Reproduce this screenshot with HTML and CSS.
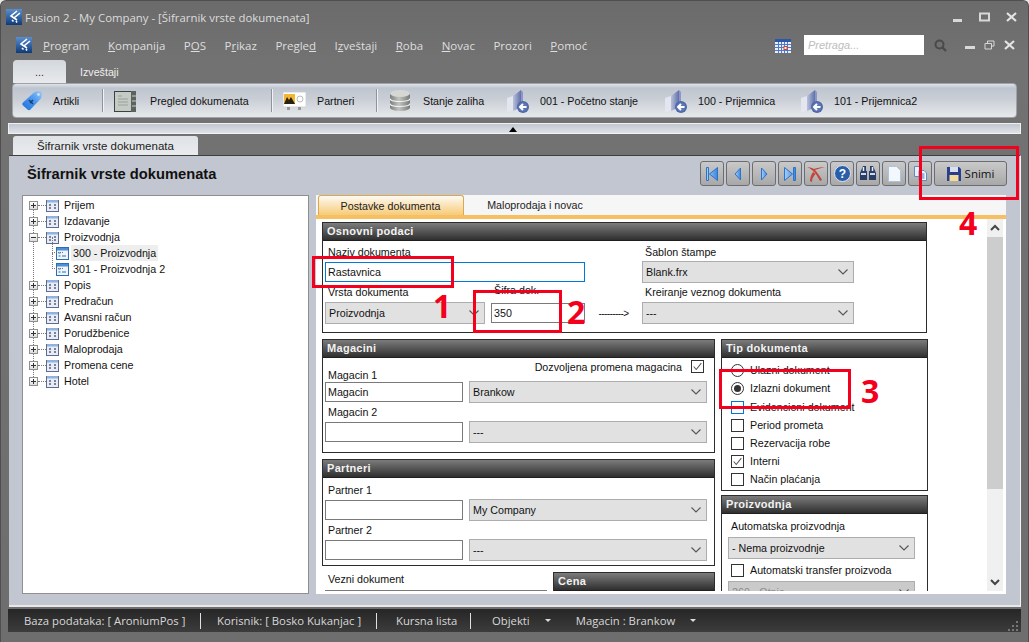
FILE: index.html
```html
<!DOCTYPE html>
<html lang="en">
<head>
    <meta charset="UTF-8">
    <meta name="viewport" content="width=device-width, initial-scale=1.0">
    <title>Fusion 2 - Šifrarnik vrste dokumenata</title>
    <link rel="stylesheet" href="styles.css">
</head>
<body>
    <!-- Shared icons -->
    <svg class="defs" width="0" height="0">
        <defs>
            <linearGradient id="logoBg" x1="0" y1="0" x2="0" y2="1">
                <stop offset="0" stop-color="#5a8fd0"/><stop offset="1" stop-color="#0f3a78"/>
            </linearGradient>
            <linearGradient id="folderBg" x1="0" y1="0" x2="1" y2="0">
                <stop offset="0" stop-color="#b9c1da"/><stop offset="1" stop-color="#5f70ab"/>
            </linearGradient>
            <linearGradient id="navBlue" x1="0" y1="0" x2="1" y2="0">
                <stop offset="0" stop-color="#a9cff5"/><stop offset="1" stop-color="#3d86dc"/>
            </linearGradient>
            <linearGradient id="tagBlue" x1="0" y1="1" x2="1" y2="0">
                <stop offset="0" stop-color="#1f6fd8"/><stop offset=".6" stop-color="#4f9cf0"/><stop offset="1" stop-color="#a3cdf6"/>
            </linearGradient>
            <linearGradient id="diskGrey" x1="0" y1="0" x2="1" y2="0">
                <stop offset="0" stop-color="#7c7e7c"/><stop offset=".45" stop-color="#c2c4c2"/><stop offset="1" stop-color="#777977"/>
            </linearGradient>
            <symbol id="logo" viewBox="0 0 16 16">
                <rect width="16" height="16" fill="url(#logoBg)"/>
                <path d="M11 2 5 7l3 2M14 4 8 9l3 2M6 11l1.500 1.500M10 12l1 1.500" fill="none" stroke="#fff" stroke-width="1.600"/>
            </symbol>
            <symbol id="folder-back" viewBox="0 0 24 24">
                <path d="M1 9 7 7V22L1 23Z" fill="#e3e6ee"/>
                <path d="M7 7 15 1V18L7 22Z" fill="url(#folderBg)"/>
                <path d="M15 1 17 3V14H15Z" fill="#8c97c4"/>
                <circle cx="17" cy="18" r="6" fill="#4f68a8"/>
                <circle cx="17" cy="18" r="4.500" fill="#5d76b4"/>
                <path d="M20.500 18H14.500M17 15l-3 3 3 3" fill="none" stroke="#fff" stroke-width="2"/>
            </symbol>
            <symbol id="tree-grid" viewBox="0 0 13 13">
                <rect x=".5" y="1.500" width="12" height="11" fill="#e8ecf4" stroke="#5f6b8c"/>
                <rect x="1" y="1" width="11" height="2.500" fill="#8fb2e0"/>
                <path d="M3 6h2M8 6h2M3 9h2M8 9h2" stroke="#555f80" stroke-width="1.400"/>
            </symbol>
            <symbol id="tree-form" viewBox="0 0 13 13">
                <rect x=".5" y=".5" width="12" height="12" fill="#eef4fc" stroke="#2d6db5"/>
                <rect x="1" y="1" width="11" height="2.500" fill="#4d90d8"/>
                <path d="M2.500 6h2M2.500 9h2M6 9h4" stroke="#2d6db5"/>
            </symbol>
            <symbol id="chev" viewBox="0 0 10 6">
                <path d="M.5.5 5 5 9.500.5" fill="none" stroke="#555" stroke-width="1.100"/>
            </symbol>
            <symbol id="tick" viewBox="0 0 13 13">
                <path d="M2 6.500 5 10 11 2.500" fill="none" stroke="#555" stroke-width="1.200"/>
            </symbol>
        </defs>
    </svg>

    <div class="window">
        <header class="titlebar">
            <svg class="logo"><use href="#logo"/></svg>
            <span class="title-text">Fusion 2 - My Company - [Šifrarnik vrste dokumenata]</span>
            <div class="win-controls">
                <svg width="11" height="11" viewBox="0 0 11 11"><rect x="1" y="7" width="9" height="3" fill="#d8d8d8"/></svg>
                <svg width="11" height="11" viewBox="0 0 11 11"><path d="M1 1.500h9v7H1z" fill="none" stroke="#d8d8d8" stroke-width="2"/></svg>
                <svg width="11" height="11" viewBox="0 0 11 11"><path d="M1 1l9 8M10 1 1 9" stroke="#e4e4e4" stroke-width="2.200"/></svg>
            </div>
        </header>

        <nav class="menubar">
            <svg class="logo"><use href="#logo"/></svg>
            <a><u>P</u>rogram</a>
            <a><u>K</u>ompanija</a>
            <a>P<u>O</u>S</a>
            <a>P<u>r</u>ikaz</a>
            <a>Pregle<u>d</u></a>
            <a>I<u>z</u>veštaji</a>
            <a><u>R</u>oba</a>
            <a><u>N</u>ovac</a>
            <a>Prozori</a>
            <a><u>P</u>omoć</a>
            <div class="menu-right">
                <svg class="calendar" width="16" height="15" viewBox="0 0 16 15">
                    <rect y="1" width="16" height="14" fill="#e8eefa"/>
                    <rect y="1" width="16" height="3" fill="#2e56a8"/>
                    <path d="M0 6.500h16M0 9.500h16M0 12.500h16M3.500 4v11M6.500 4v11M9.500 4v11M12.500 4v11" stroke="#4f78c8"/>
                    <rect x="9" y="8.500" width="3" height="3" fill="#fff" stroke="#d8412a"/>
                </svg>
                <input class="search" type="text" placeholder="Pretraga...">
                <svg class="search-icon" width="13" height="13" viewBox="0 0 13 13">
                    <circle cx="5.500" cy="5.500" r="4" fill="none" stroke="#4a4a4a" stroke-width="2"/>
                    <path d="M8.500 8.500 12 12" stroke="#4a4a4a" stroke-width="2.400"/>
                </svg>
                <div class="mdi-controls">
                    <svg width="11" height="11" viewBox="0 0 11 11"><rect x="1" y="6" width="10" height="3" fill="#d8d8d8"/></svg>
                    <svg width="11" height="11" viewBox="0 0 11 11"><path d="M3.500 3V1h6.500v5H8M1 3.500h6.500V9H1z" fill="none" stroke="#d8d8d8"/></svg>
                    <svg width="11" height="11" viewBox="0 0 11 11"><path d="M1 1l9 8M10 1 1 9" stroke="#e4e4e4" stroke-width="2.200"/></svg>
                </div>
            </div>
        </nav>

        <div class="ribbon-tabs">
            <a class="ribbon-tab active">...</a>
            <a class="ribbon-tab">Izveštaji</a>
        </div>

        <div class="toolbar">
            <a class="tool w-artikli">
                <svg width="21" height="21" viewBox="0 0 21 21">
                    <path d="M1 12.500 12 2.500q1-.9 2.500-1l4-.5q1.500 0 1.500 1.500l-.5 4q-.1 1.500-1 2.500L8.500 19.500q-1.500 1.500-3 0L1 15.500q-1.500-1.500 0-3Z" fill="url(#tagBlue)"/>
                    <circle cx="16.500" cy="4.500" r="1.300" fill="#dfe6ee"/>
                    <path d="M7 10l4 4M8 13l3-3" stroke="#1d3f78" stroke-width="1.600"/>
                </svg>
                <span>Artikli</span>
            </a>
            <i class="tool-sep"></i>
            <a class="tool w-pregled">
                <svg width="22" height="22" viewBox="0 0 22 22">
                    <rect x=".5" y="1.500" width="17" height="20" fill="#c4cac4" stroke="#3c423e"/>
                    <rect x="17" y="1" width="5" height="21" fill="#5c625e"/>
                    <path d="M4 6h4M4 9h10M4 12h10M4 15h10" stroke="#9aa09c"/>
                    <path d="M18 6h4M18 11h4M18 16h4" stroke="#c8cec8"/>
                </svg>
                <span>Pregled dokumenata</span>
            </a>
            <i class="tool-sep"></i>
            <a class="tool w-partneri">
                <svg width="23" height="18" viewBox="0 0 23 18">
                    <rect width="23" height="15" fill="#fff" stroke="#d4d4d4"/>
                    <rect x="1" y="2" width="11" height="10" fill="#f2b632"/>
                    <path d="M1 12l3-7 2 3 2-3 4 7Z" fill="#2b2010"/>
                    <circle cx="17" cy="7" r="3" fill="none" stroke="#bbb"/>
                    <path d="M4 15h3v3H4zM15 15h3v3h-3z" fill="#999"/>
                </svg>
                <span>Partneri</span>
            </a>
            <i class="tool-sep"></i>
            <a class="tool w-zalihe">
                <svg width="20" height="21" viewBox="0 0 20 21">
                    <path d="M0 3.500v14c0 4.500 20 4.500 20 0v-14Z" fill="url(#diskGrey)"/>
                    <ellipse cx="10" cy="3.500" rx="10" ry="3.500" fill="#d5d7d5"/>
                    <path d="M0 8.500c0 4 20 4 20 0M0 13.500c0 4 20 4 20 0" fill="none" stroke="#f0f0f0" stroke-width="1.200"/>
                </svg>
                <span>Stanje zaliha</span>
            </a>
            <a class="tool w-doc1"><svg class="doc-icon"><use href="#folder-back"/></svg><span>001 - Početno stanje</span></a>
            <a class="tool w-doc2"><svg class="doc-icon"><use href="#folder-back"/></svg><span>100 - Prijemnica</span></a>
            <a class="tool w-doc3"><svg class="doc-icon"><use href="#folder-back"/></svg><span>101 - Prijemnica2</span></a>
        </div>

        <div class="splitter"><i class="split-arrow"></i></div>

        <div class="doc-tabs"><a class="doc-tab">Šifrarnik vrste dokumenata</a></div>

        <main class="main">
            <div class="main-head">
                <h1>Šifrarnik vrste dokumenata</h1>
                <div class="actions">
                    <button class="act"><svg width="14" height="14" viewBox="0 0 14 14"><path d="M1.500.5h2v13h-2zM12.500.5v13L4.500 7Z" fill="url(#navBlue)" stroke="#2a73cf"/></svg></button>
                    <button class="act"><svg width="14" height="14" viewBox="0 0 14 14"><path d="M9.500 1v12L4 7Z" fill="url(#navBlue)" stroke="#2a73cf"/></svg></button>
                    <button class="act"><svg width="14" height="14" viewBox="0 0 14 14"><path d="M4.500 1v12L10 7Z" fill="url(#navBlue)" stroke="#2a73cf"/></svg></button>
                    <button class="act"><svg width="14" height="14" viewBox="0 0 14 14"><path d="M1.500.5v13L9.500 7ZM10.500.5h2v13h-2z" fill="url(#navBlue)" stroke="#2a73cf"/></svg></button>
                    <button class="act"><svg width="18" height="16" viewBox="0 0 18 16"><path d="M0 1c5 2 9 6 13 14L15 14C12 9 10 6 8 4c3-1 6-2 10-3-5 0-8 1-11 2C5 2 3 1 0 1ZM6 6C4 9 3 12 3 15L5 16C5 12 7 10 8.500 8Z" fill="#c4453a"/></svg></button>
                    <button class="act"><svg width="17" height="17" viewBox="0 0 17 17"><circle cx="8.500" cy="8.500" r="8" fill="#2a5ea8" stroke="#dfe6f2"/><text class="help-mark" x="8.500" y="13" text-anchor="middle">?</text></svg></button>
                    <button class="act"><svg width="16" height="15" viewBox="0 0 16 15"><path d="M3 0h3v5h1v9H0V7ZM10 0h3l3 7v7H9V5h1Z" fill="#2b3f66"/><path d="M3.500 1v4M12.500 1v4" stroke="#e8eefa" stroke-width="1.500"/><path d="M1 8h5M10 8h5" stroke="#cfd9ee" stroke-width="2"/></svg></button>
                    <button class="act"><svg width="13" height="16" viewBox="0 0 13 16"><path d="M.5.5h8l4 4v11H.5Z" fill="#f4f8fd" stroke="#a8c4e4"/></svg></button>
                    <button class="act"><svg width="13" height="15" viewBox="0 0 13 15"><path d="M.5.500h6v10h-6Z" fill="#e8f0fa" stroke="#5b8bc6"/><path d="M5 4.500h5l2.500 2.500v7.500H5Z" fill="#f4f8fd" stroke="#5b8bc6"/><path d="M6.500 8h4M6.500 10h4M6.500 12h4" stroke="#3f75b8"/></svg></button>
                    <button class="act save">
                        <svg width="14" height="14" viewBox="0 0 14 14"><path d="M0 0h12l2 2v12H0Z" fill="#2a3f8c"/><rect x="3" y="0" width="8" height="5" fill="#d8dff0"/><rect x="2.500" y="8" width="9" height="6" fill="#f3dc9a"/></svg>
                        <span>Snimi</span>
                    </button>
                </div>
            </div>

            <div class="main-body">
                <aside class="tree">
                    <ul class="tree-list">
                        <li class="tree-row"><i class="expander plus"></i><svg class="node-icon"><use href="#tree-grid"/></svg>Prijem</li>
                        <li class="tree-row"><i class="expander plus"></i><svg class="node-icon"><use href="#tree-grid"/></svg>Izdavanje</li>
                        <li class="tree-row"><i class="expander minus"></i><svg class="node-icon"><use href="#tree-grid"/></svg>Proizvodnja</li>
                        <li class="tree-row child first-child"><svg class="node-icon"><use href="#tree-form"/></svg><span class="selected">300 - Proizvodnja</span></li>
                        <li class="tree-row child"><svg class="node-icon"><use href="#tree-form"/></svg><span class="leaf">301 - Proizvodnja 2</span></li>
                        <li class="tree-row"><i class="expander plus"></i><svg class="node-icon"><use href="#tree-grid"/></svg>Popis</li>
                        <li class="tree-row"><i class="expander plus"></i><svg class="node-icon"><use href="#tree-grid"/></svg>Predračun</li>
                        <li class="tree-row"><i class="expander plus"></i><svg class="node-icon"><use href="#tree-grid"/></svg>Avansni račun</li>
                        <li class="tree-row"><i class="expander plus"></i><svg class="node-icon"><use href="#tree-grid"/></svg>Porudžbenice</li>
                        <li class="tree-row"><i class="expander plus"></i><svg class="node-icon"><use href="#tree-grid"/></svg>Maloprodaja</li>
                        <li class="tree-row"><i class="expander plus"></i><svg class="node-icon"><use href="#tree-grid"/></svg>Promena cene</li>
                        <li class="tree-row"><i class="expander plus"></i><svg class="node-icon"><use href="#tree-grid"/></svg>Hotel</li>
                    </ul>
                </aside>

                <section class="pane">
                    <div class="pane-tabs">
                        <a class="pane-tab active">Postavke dokumenta</a>
                        <a class="pane-tab">Maloprodaja i novac</a>
                    </div>
                    <div class="pane-body">
                        <div class="form-scroll">
                            <div class="group group-main">
                                <h2 class="group-head">Osnovni podaci</h2>
                                <div class="grid-main">
                                    <label class="lbl span-3">Naziv dokumenta</label>
                                    <label class="lbl col-5">Šablon štampe</label>
                                    <input class="txt focus span-3" type="text" value="Rastavnica">
                                    <div class="sel col-5"><span>Blank.frx</span><svg class="chev"><use href="#chev"/></svg></div>
                                    <label class="lbl lbl-up">Vrsta dokumenta</label>
                                    <label class="lbl code-lbl col-3">Šifra dok.</label>
                                    <label class="lbl lbl-up col-5">Kreiranje veznog dokumenta</label>
                                    <div class="sel"><span>Proizvodnja</span><svg class="chev"><use href="#chev"/></svg></div>
                                    <input class="txt col-3" type="text" value="350">
                                    <span class="dash-arrow">---------&gt;</span>
                                    <div class="sel col-5"><span>---</span><svg class="chev"><use href="#chev"/></svg></div>
                                </div>
                            </div>

                            <div class="columns">
                                <div class="col-left">
                                    <div class="group">
                                        <h2 class="group-head">Magacini</h2>
                                        <div class="grid-pair pair-store">
                                            <div class="allow-row">
                                                <span>Dozvoljena promena magacina</span>
                                                <i class="box checked"><svg width="13" height="13"><use href="#tick"/></svg></i>
                                            </div>
                                            <label class="lbl span-2 lbl-tight">Magacin 1</label>
                                            <input class="txt" type="text" value="Magacin">
                                            <div class="sel"><span>Brankow</span><svg class="chev"><use href="#chev"/></svg></div>
                                            <label class="lbl span-2">Magacin 2</label>
                                            <input class="txt" type="text">
                                            <div class="sel"><span>---</span><svg class="chev"><use href="#chev"/></svg></div>
                                        </div>
                                    </div>

                                    <div class="group">
                                        <h2 class="group-head">Partneri</h2>
                                        <div class="grid-pair pair-partner">
                                            <label class="lbl span-2">Partner 1</label>
                                            <input class="txt" type="text">
                                            <div class="sel"><span>My Company</span><svg class="chev"><use href="#chev"/></svg></div>
                                            <label class="lbl span-2">Partner 2</label>
                                            <input class="txt" type="text">
                                            <div class="sel"><span>---</span><svg class="chev"><use href="#chev"/></svg></div>
                                        </div>
                                    </div>

                                    <div class="bottom-row">
                                        <div class="linked">
                                            <label class="lbl">Vezni dokument</label>
                                            <input class="txt" type="text">
                                        </div>
                                        <div class="group group-price">
                                            <h2 class="group-head">Cena</h2>
                                        </div>
                                    </div>
                                </div>

                                <div class="col-right">
                                    <div class="group">
                                        <h2 class="group-head">Tip dokumenta</h2>
                                        <ul class="opts">
                                            <li><i class="radio"></i>Ulazni dokument</li>
                                            <li><i class="radio on"></i>Izlazni dokument</li>
                                            <li><i class="box focus"></i>Evidencioni dokument</li>
                                            <li><i class="box"></i>Period prometa</li>
                                            <li><i class="box"></i>Rezervacija robe</li>
                                            <li><i class="box checked"><svg width="13" height="13"><use href="#tick"/></svg></i>Interni</li>
                                            <li><i class="box"></i>Način plaćanja</li>
                                        </ul>
                                    </div>
                                    <div class="group">
                                        <h2 class="group-head">Proizvodnja</h2>
                                        <div class="prod">
                                            <label class="lbl">Automatska proizvodnja</label>
                                            <div class="sel"><span>- Nema proizvodnje</span><svg class="chev"><use href="#chev"/></svg></div>
                                            <div class="prod-check"><i class="box"></i>Automatski transfer proizvoda</div>
                                            <div class="sel disabled"><span>260 - Otpis</span><svg class="chev"><use href="#chev"/></svg></div>
                                        </div>
                                    </div>
                                </div>
                            </div>
                        </div>

                        <div class="scrollbar">
                            <svg class="sb-arrow" width="16" height="18" viewBox="0 0 16 18"><path d="M4 11 8 7l4 4" fill="none" stroke="#444" stroke-width="2"/></svg>
                            <div class="sb-thumb"></div>
                            <svg class="sb-arrow" width="16" height="18" viewBox="0 0 16 18"><path d="M4 7l4 4 4-4" fill="none" stroke="#444" stroke-width="2"/></svg>
                        </div>
                    </div>
                </section>
            </div>
        </main>

        <footer class="statusbar">
            <span class="st st-db">Baza podataka: [ AroniumPos ]</span>
            <span class="st st-user">Korisnik: [ Bosko Kukanjac ]</span>
            <span class="st st-rate">Kursna lista</span>
            <span class="st-drop st-obj">Objekti<i class="drop"></i></span>
            <span class="st-drop st-store">Magacin : Brankow<i class="drop"></i></span>
            <svg class="grip" width="12" height="12" viewBox="0 0 12 12"><path d="M9 1h2v2H9zM5 5h2v2H5zM9 5h2v2H9zM1 9h2v2H1zM5 9h2v2H5zM9 9h2v2H9z" fill="#777"/></svg>
        </footer>

        <!-- Red annotations drawn over the screenshot -->
        <i class="mark mark-1"></i><b class="num num-1">1</b>
        <i class="mark mark-2"></i><b class="num num-2">2</b>
        <i class="mark mark-3"></i><b class="num num-3">3</b>
        <i class="mark mark-4"></i><b class="num num-4">4</b>
    </div>
</body>
</html>
```

FILE: styles.css
```css
html, body {
    margin: 0;
    padding: 0;
    height: 100%;
    overflow: hidden;
    background: #e9e9e9;
}
body {
    font-family: "Liberation Sans", Arial, sans-serif;
    font-size: 10.700px;
    color: #111;
}
.defs {
    position: absolute;
}
a {
    cursor: pointer;
}
.window {
    position: relative;
    display: flex;
    flex-direction: column;
    width: 1029px;
    height: 642px;
    box-sizing: border-box;
    border: 1px solid #4f4f4f;
    border-bottom: 0;
    border-radius: 6px 6px 0 0;
    background: linear-gradient(#6b6b6b, #727272 60px, #6e6e6e);
    overflow: hidden;
}

/* Title bar and menu */
.titlebar {
    display: flex;
    align-items: center;
    flex: none;
    height: 29px;
    padding: 3px 0 0 5px;
    box-sizing: border-box;
    color: #dcdcdc;
    font-family: "Open Sans", sans-serif;
    font-size: 11.400px;
}
.logo {
    width: 16px;
    height: 16px;
    flex: none;
}
.title-text {
    margin-left: 3px;
}
.win-controls {
    display: flex;
    gap: 16px;
    margin-left: auto;
    margin-right: 11px;
}
.menubar {
    display: flex;
    align-items: center;
    flex: none;
    height: 30px;
    padding-left: 15px;
    color: #dedede;
    font-family: "Open Sans", sans-serif;
    font-size: 11.500px;
}
.menubar a {
    margin-right: 18.500px;
}
.menubar .logo {
    margin-right: 11px;
}
.menu-right {
    display: flex;
    align-items: center;
    margin-left: auto;
}
.calendar {
    margin-right: 13px;
}
.search {
    width: 120px;
    height: 20px;
    box-sizing: border-box;
    border: 0;
    padding: 0 4px;
    background: #fff;
    font: italic 11px "Liberation Sans", sans-serif;
}
.search::placeholder {
    color: #bdbdbd;
}
.search-icon {
    margin: 0 17px 0 10px;
}
.mdi-controls {
    display: flex;
    gap: 9px;
    margin-right: 13px;
}

/* Ribbon */
.ribbon-tabs {
    display: flex;
    flex: none;
    height: 23px;
    padding-left: 12px;
}
.ribbon-tab {
    display: flex;
    align-items: center;
    justify-content: center;
    color: #eee;
    padding: 0 14px;
}
.ribbon-tab.active {
    width: 53px;
    padding: 0;
    box-sizing: border-box;
    color: #333;
    border-radius: 4px 4px 0 0;
    background: linear-gradient(#d3d7dd, #e8eaec);
}
.toolbar {
    display: flex;
    align-items: center;
    flex: none;
    height: 35px;
    margin: 0 11px 0 11px;
    box-sizing: border-box;
    border: 1px solid #9fa3a9;
    border-radius: 4px;
    background: linear-gradient(#dfe3e8, #bfc5cf 12%, #c9ced6 45%, #e6e9eb);
}
.tool {
    display: flex;
    align-items: center;
    color: #111;
    flex: none;
}
.tool-sep {
    flex: none;
    width: 1px;
    height: 23px;
    background: #8f949c;
    box-shadow: 1px 0 0 #f0f2f4;
}
.w-artikli { width: 89px; padding-left: 9px; box-sizing: border-box; }
.w-artikli span { margin-left: 10px; }
.w-pregled { width: 168px; padding-left: 11px; box-sizing: border-box; }
.w-pregled span { margin-left: 14px; }
.w-partneri { width: 104px; padding-left: 11px; box-sizing: border-box; }
.w-partneri span { margin-left: 11px; }
.w-zalihe { width: 129px; padding-left: 13px; box-sizing: border-box; }
.w-zalihe span { margin-left: 13px; }
.w-doc1 { width: 158px; }
.w-doc2 { width: 136px; }
.doc-icon {
    width: 24px;
    height: 24px;
    margin-right: 10px;
    flex: none;
}
.splitter {
    position: relative;
    flex: none;
    height: 11px;
    margin: 5px 7px 0 7px;
    border: 1px solid #eef0f2;
    box-sizing: border-box;
    background: linear-gradient(#c2c7d0, #dfe2e7);
}
.split-arrow {
    position: absolute;
    left: 500px;
    top: 3px;
    border: 4px solid transparent;
    border-top: 0;
    border-bottom: 5px solid #000;
}
.doc-tabs {
    display: flex;
    flex: none;
    height: 19px;
    margin-top: 2px;
    padding-left: 12px;
}
.doc-tab {
    display: flex;
    align-items: center;
    justify-content: center;
    width: 185px;
    border-radius: 3px 3px 0 0;
    background: linear-gradient(#dfe2e6, #e9ebed);
    color: #222;
    font-size: 11.500px;
}

/* Main panel */
.main {
    display: flex;
    flex-direction: column;
    width: 1012px;
    height: 452px;
    margin-left: 8px;
    box-sizing: border-box;
    padding: 0 14px 11px 13px;
    border-top: 1px solid #3f3f3f;
    border-right: 1px solid #f2f2f2;
    border-bottom: 2px solid #e8e8e8;
    background: #c2c6d0;
}
.main-head {
    display: flex;
    align-items: center;
    justify-content: space-between;
    flex: none;
    height: 39px;
    padding: 0 0 4px 5px;
    box-sizing: border-box;
}
.main-head h1 {
    margin: 0;
    font-size: 14.700px;
    font-weight: bold;
    color: #111;
}
.actions {
    display: flex;
    gap: 2px;
    margin-right: -1px;
}
.act {
    display: flex;
    align-items: center;
    justify-content: center;
    width: 24px;
    height: 25px;
    padding: 0;
    border: 1px solid #6d6d6d;
    border-radius: 3px;
    background: linear-gradient(#c9c9c9, #a8a8a8);
    font: 11.500px "Open Sans", sans-serif;
    color: #111;
}
.act.save {
    width: 73px;
    gap: 4px;
}
.help-mark {
    font: bold 12px "Liberation Sans", sans-serif;
    fill: #fff;
}
.main-body {
    display: flex;
    gap: 7px;
    flex: 1;
    min-height: 0;
}

/* Tree */
.tree {
    width: 287px;
    box-sizing: border-box;
    border: 1px solid #8f8f8f;
    background: #fff;
    flex: none;
}
.tree-list {
    position: relative;
    list-style: none;
    margin: 0;
    padding: 1px 0 0 6px;
}
.tree-list::before {
    content: "";
    position: absolute;
    left: 10px;
    top: 9px;
    height: 176px;
    border-left: 1px dotted #777;
}
.tree-row {
    position: relative;
    display: flex;
    align-items: center;
    height: 16px;
    white-space: nowrap;
}
.expander {
    position: relative;
    flex: none;
    width: 9px;
    height: 9px;
    box-sizing: border-box;
    border: 1px solid #8f8f8f;
    background: linear-gradient(#fff, #dcdcdc);
    z-index: 1;
}
.expander::before {
    content: "";
    position: absolute;
    left: 1px;
    top: 3px;
    width: 5px;
    height: 1px;
    background: #333;
}
.expander.plus::after {
    content: "";
    position: absolute;
    left: 3px;
    top: 1px;
    width: 1px;
    height: 5px;
    background: #333;
}
.node-icon {
    flex: none;
    width: 13px;
    height: 13px;
    margin-right: 5px;
    margin-left: 8px;
}
.tree-row:not(.child)::after {
    content: "";
    position: absolute;
    left: 9px;
    top: 8px;
    width: 8px;
    border-top: 1px dotted #777;
}
.tree-row.child {
    padding-left: 27px;
}
.tree-row.child .node-icon {
    margin-left: 0;
    margin-right: 2px;
}
.tree-row.child::before {
    content: "";
    position: absolute;
    left: 23px;
    top: -8px;
    height: 16px;
    width: 11px;
    border-left: 1px dotted #777;
    border-bottom: 1px dotted #777;
    box-sizing: border-box;
}
.selected, .leaf {
    padding: 1px 2px;
    line-height: 14px;
}
.selected {
    background: #eeeeee;
}

/* Right pane */
.pane {
    display: flex;
    flex-direction: column;
    flex: 1;
    min-width: 0;
    background: #fff;
    padding-bottom: 3px;
    box-sizing: border-box;
}
.pane-tabs {
    display: flex;
    flex: none;
    height: 24px;
    box-sizing: border-box;
    padding: 0 0 0 2px;
    border-bottom: 4px solid #f5bf62;
    background: #f6f6f6;
}
.pane-tab {
    display: flex;
    align-items: center;
    justify-content: center;
    width: 140px;
    color: #222;
}
.pane-tab + .pane-tab {
    margin-left: 1px;
}
.pane-tab.active {
    width: 146px;
    box-sizing: border-box;
    padding-right: 1px;
    border: 1px solid #d9a94e;
    border-bottom: 0;
    border-radius: 3px 3px 0 0;
    background: linear-gradient(#fdfaf2, #f7cb78);
}
.pane-body {
    display: flex;
    flex: 1;
    min-height: 0;
}
.form-scroll {
    flex: 1;
    min-width: 0;
    padding: 3px 0 0 6px;
    overflow: hidden;
}
.scrollbar {
    display: flex;
    flex-direction: column;
    flex: none;
    width: 16px;
    margin-right: 3px;
    background: #f0f0f0;
}
.sb-arrow {
    flex: none;
}
.sb-thumb {
    height: 252px;
    background: #cdcdcd;
    margin-bottom: auto;
}

/* Group boxes */
.group {
    border: 1px solid #2c2c2c;
    background: #fff;
}
.group-head {
    margin: 0;
    height: 17px;
    padding-left: 4px;
    line-height: 16px;
    font-size: 11px;
    font-weight: bold;
    letter-spacing: .3px;
    color: #f2f2f2;
    background: linear-gradient(#7c7c7c, #2f2f2f);
    border-bottom: 1px solid #1f1f1f;
    box-sizing: content-box;
}
.group-main {
    width: 603px;
    height: 109px;
}
.lbl {
    display: block;
    padding-left: 3px;
    color: #111;
    white-space: nowrap;
}
.txt {
    display: block;
    width: 100%;
    height: 20px;
    box-sizing: border-box;
    margin: 0;
    padding: 0 2px;
    border: 1px solid #7a7a7a;
    background: #fff;
    font: 10.700px "Liberation Sans", sans-serif;
    color: #111;
    outline: 0;
}
.txt.focus {
    border-color: #0078d7;
}
.sel {
    display: flex;
    align-items: center;
    justify-content: space-between;
    height: 22px;
    box-sizing: border-box;
    padding: 0 5px 0 3px;
    border: 1px solid #adadad;
    background: #e1e1e1;
    color: #111;
}
.sel.disabled {
    color: #8a8a8a;
    background: #cacaca;
}
.chev {
    width: 10px;
    height: 6px;
    flex: none;
}
.grid-main {
    display: grid;
    grid-template-columns: 160px 6px 94px 57px 212px;
    grid-template-rows: 20px 22px 19px 22px;
    align-items: center;
    margin-left: 2px;
}
.grid-main > .lbl:nth-child(-n+2) {
    padding-top: 1px;
}
.span-3 { grid-column: 1 / span 3; }
.col-3 { grid-column: 3; }
.col-5 { grid-column: 5; }
.code-lbl {
    align-self: start;
    padding-top: 1px;
}
.lbl-up {
    padding-bottom: 2px;
}
.dash-arrow {
    grid-column: 4;
    justify-self: center;
    font-size: 10px;
    letter-spacing: -.6px;
    white-space: nowrap;
}
.columns {
    display: flex;
    gap: 6px;
    margin-top: 6px;
}
.col-left {
    display: flex;
    flex-direction: column;
    gap: 6px;
    flex: none;
    width: 393px;
}
.col-right {
    display: flex;
    flex-direction: column;
    gap: 4px;
    flex: none;
    width: 207px;
}
.grid-pair {
    display: grid;
    grid-template-columns: 138px 238px;
    column-gap: 6px;
    align-items: center;
    margin-left: 2px;
}
.span-2 { grid-column: 1 / span 2; }
.pair-store { height: 94px; grid-template-rows: 8px 15px 22px 18px 22px; align-content: start; }
.pair-partner { height: 87px; grid-template-rows: 21px 22px 18px 22px; align-content: start; }
.pair-partner > .lbl:first-child {
    padding-top: 2px;
}
.allow-row {
    grid-column: 1 / span 2;
    grid-row: 1 / span 2;
    display: flex;
    align-items: center;
    justify-content: flex-end;
    gap: 9px;
    align-self: start;
    padding: 2px 3px 0 0;
}
.lbl-tight {
    grid-row: 2;
    align-self: end;
}
.bottom-row {
    display: flex;
    gap: 6px;
}
.linked {
    width: 222px;
    margin-left: 3px;
    padding-top: 1px;
}
.linked .lbl {
    height: 13px;
    margin-bottom: 4px;
}
.group-price {
    flex: 1;
    height: 60px;
}

/* Options */
.opts {
    list-style: none;
    margin: 0;
    padding: 3px 0 2px 9px;
}
.opts li {
    display: flex;
    align-items: center;
    gap: 6px;
    height: 18px;
}
.opts li:nth-child(3) {
    margin-top: 1px;
}
.box, .radio {
    display: flex;
    align-items: center;
    justify-content: center;
    flex: none;
    width: 13px;
    height: 13px;
    box-sizing: border-box;
    border: 1px solid #333;
    background: #fff;
}
.box.focus {
    border-color: #0078d7;
}
.radio {
    position: relative;
    border-radius: 50%;
}
.radio.on::after {
    content: "";
    width: 7px;
    height: 7px;
    border-radius: 50%;
    background: #333;
}
.prod {
    height: 90px;
    padding: 6px 12px 0 6px;
}
.prod .lbl {
    height: 14px;
    margin-bottom: 3px;
}
.prod-check {
    display: flex;
    align-items: center;
    gap: 6px;
    height: 22px;
    padding-left: 3px;
}

/* Status bar */
.statusbar {
    position: relative;
    display: flex;
    align-items: center;
    flex: none;
    width: 1013px;
    height: 23px;
    margin: 2px 0 0 7px;
    box-sizing: border-box;
    background: linear-gradient(#262626, #3c3c3c);
    color: #d8d8d8;
    font-family: "Open Sans", sans-serif;
    font-size: 11.300px;
    white-space: nowrap;
}
.st {
    display: flex;
    align-items: center;
    height: 16px;
    border-right: 1px solid #e0e0e0;
    flex: none;
    box-sizing: border-box;
}
.st-db { width: 193px; padding-left: 16px; }
.st-user { width: 176px; padding-left: 16px; }
.st-rate { width: 94px; padding-left: 19px; }
.st-drop {
    display: flex;
    align-items: center;
    flex: none;
}
.st-obj { margin-left: 21px; }
.st-store { margin-left: 25px; }
.drop {
    margin-left: 15px;
    border: 3px solid transparent;
    border-bottom: 0;
    border-top: 3px solid #ddd;
}
.grip {
    position: absolute;
    right: 2px;
    bottom: 0;
}

/* Annotations */
.mark {
    position: absolute;
    box-sizing: border-box;
    border: 3px solid #f2001c;
    pointer-events: none;
}
.mark-1 { left: 311px; top: 255px; width: 142px; height: 32px; }
.mark-2 { left: 472px; top: 289px; width: 89px; height: 43px; }
.mark-3 { left: 718px; top: 368px; width: 132px; height: 40px; }
.mark-4 { left: 918px; top: 145px; width: 100px; height: 54px; }
.num {
    position: absolute;
    color: #f2001c;
    font: bold 32px/32px "Open Sans", sans-serif;
}
.num-1 { left: 432px; top: 289px; }
.num-2 { left: 566px; top: 295px; }
.num-3 { left: 860px; top: 374px; }
.num-4 { left: 958px; top: 206px; }
```
